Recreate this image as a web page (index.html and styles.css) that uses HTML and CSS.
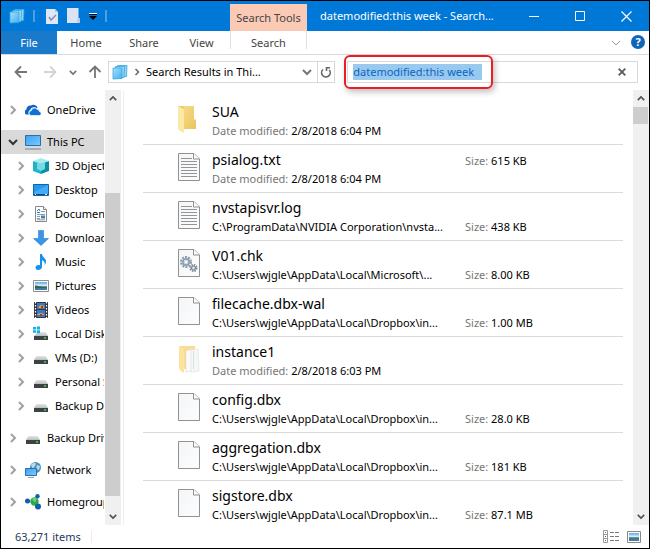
FILE: index.html
```html
<!DOCTYPE html>
<html lang="en">
<head>
    <meta charset="UTF-8">
    <meta name="viewport" content="width=device-width, initial-scale=1.0">
    <title>datemodified:this week - Search Results</title>
    <link rel="stylesheet" href="styles.css">
</head>
<body>
    <!-- Shared icons -->
    <svg class="sprite" aria-hidden="true">
        <defs>
            <linearGradient id="gSky" x1="0" y1="0" x2="1" y2="1">
                <stop offset="0" stop-color="#3aa0f4"/><stop offset="1" stop-color="#7ecbff"/>
            </linearGradient>
            <linearGradient id="gSheet" x1="0" y1="0" x2="1" y2="1">
                <stop offset="0" stop-color="#a9defa"/><stop offset="1" stop-color="#3fb0f2"/>
            </linearGradient>
            <linearGradient id="gDrive" x1="0" y1="0" x2="0" y2="1">
                <stop offset="0" stop-color="#e4e4e4"/><stop offset="1" stop-color="#b9bcbf"/>
            </linearGradient>
            <linearGradient id="gPage" x1="0" y1="0" x2="1" y2="1">
                <stop offset="0" stop-color="#f4f5f6"/><stop offset="1" stop-color="#fcfdfe"/>
            </linearGradient>
            <linearGradient id="gFolder" x1="0" y1="0" x2="1" y2="1">
                <stop offset="0" stop-color="#f6dc8c"/><stop offset="1" stop-color="#eac55c"/>
            </linearGradient>
            <linearGradient id="gPhoto" x1="0" y1="0" x2="0" y2="1">
                <stop offset="0" stop-color="#5fa4ea"/><stop offset=".45" stop-color="#d9eefa"/>
                <stop offset=".6" stop-color="#47796b"/><stop offset="1" stop-color="#3d7fb8"/>
            </linearGradient>
        </defs>
        <symbol id="chevron" viewBox="0 0 8 10"><path d="M2 1l4 4-4 4" fill="none" stroke="currentColor" stroke-width="2"/></symbol>
        <symbol id="caret" viewBox="0 0 10 8"><path d="M1 2l4 4 4-4" fill="none" stroke="currentColor" stroke-width="2"/></symbol>
        <symbol id="caret-up" viewBox="0 0 10 8"><path d="M1 6l4-4 4 4" fill="none" stroke="currentColor" stroke-width="2"/></symbol>
        <symbol id="search-folder" viewBox="0 0 16 16">
            <path d="M5.500 1.500h9.500l-.5 11-9 .5z" fill="#8fd3f7" stroke="#37a6e0" stroke-width=".8"/>
            <path d="M3.500 2.500h9l-.5 11-8.500.5z" fill="#9ad9f9" stroke="#37a6e0" stroke-width=".8"/>
            <path d="M1 4h9v10.500l-9 .5z" fill="url(#gSheet)" stroke="#37a6e0" stroke-width=".8"/>
        </symbol>
        <symbol id="onedrive" viewBox="0 0 16 16">
            <path d="M1 12.500a2.800 2.800 0 0 1 .4-5A3.800 3.800 0 0 1 6 3.600a4.400 4.400 0 0 1 6.600 2L11.500 6C9 4.500 5.800 5.500 5.200 8 3.500 8.500 3 11 4 12.500z" fill="#0a63c9"/>
            <path d="M6.500 13.500a2.400 2.400 0 0 1-.3-4.800A3.400 3.400 0 0 1 12.300 7.500a2.400 2.400 0 0 1 2.300 2.300 1.900 1.900 0 0 1 .2 3.700z" fill="#0f70d6" stroke="#fff" stroke-width=".7"/>
        </symbol>
        <symbol id="pc" viewBox="0 0 16 16">
            <path d="M.5 1.500h15v10H.5z" fill="url(#gSky)" stroke="#2d6f9f"/>
            <path d="M0 15h16" stroke="#7b95a8" stroke-width="1.200"/><path d="M3 13h10" stroke="#cfdbe4"/>
        </symbol>
        <symbol id="cube" viewBox="0 0 16 16">
            <path d="M0 3l8-3 8 3-8 3z" fill="#a6ecef"/>
            <path d="M0 3l8 3v10l-8-3z" fill="#1fb4c5"/>
            <path d="M8 6l8-3v10l-8 3z" fill="#0c8fa5"/>
            <path d="M4 4l4 1.500 4-1.500v7l-4 2-4-2z" fill="#73dbe3"/>
        </symbol>
        <symbol id="desktop" viewBox="0 0 16 16">
            <path d="M.5 2.500h15v11H.5z" fill="#229af2" stroke="#14649f"/>
            <path d="M1 10L15 3v9H1z" fill="#42acf8"/><path d="M1 12.500h14" stroke="#0d4b7e"/>
            <path d="M2 12.500h1M12 12.500h2" stroke="#fff"/>
        </symbol>
        <symbol id="documents" viewBox="0 0 16 16">
            <path d="M2.500.5h8l3 3v12h-11z" fill="#fff" stroke="#888"/><path d="M10.500.5v3h3" fill="#eee" stroke="#888"/>
            <path d="M4 5l2-2 1 2M4 6.500h3" fill="none" stroke="#2583c4"/>
            <path d="M8 5.500h4M4 8.500h8M4 12.500h3M4 10.500h3M4 13.800h8" stroke="#8a9aa6"/><path d="M8 9.500h4v3H8z" fill="#3b86b9"/>
        </symbol>
        <symbol id="downloads" viewBox="0 0 16 16"><path d="M5.500.5h5v8h5L8 15.500.5 8.500h5z" fill="#3796e8" stroke="#2a7fcb" stroke-width=".6"/></symbol>
        <symbol id="music" viewBox="0 0 16 16">
            <path d="M7 0h2c0 3 4 4 4 7.500 0 1.500-.6 2.500-1.400 3.500.6-3-.6-4-2.600-4.800V13c0 2-2 3-3.800 3S2.500 15 2.500 13.500 4 11 5.500 11c.6 0 1 .1 1.500.3z" fill="#1193ee"/>
        </symbol>
        <symbol id="pictures" viewBox="0 0 16 16">
            <path d="M.5 2.500h15v11H.5z" fill="#fff" stroke="#8e8e8e"/><path d="M2 4h12v8H2z" fill="url(#gPhoto)"/>
            <path d="M2 7.500c3 0 4 1.500 12 1.800V10H2z" fill="#2f6357"/>
        </symbol>
        <symbol id="videos" viewBox="0 0 16 16">
            <path d="M1 0h14v16H1z" fill="#34363a"/>
            <path d="M2.500 0v16M13.500 0v16" stroke="#fff" stroke-width="1.200" stroke-dasharray="1.500 1.500"/>
            <path d="M4 1h8v6H4zM4 8h8v7H4z" fill="#3b76cc"/>
            <path d="M5 5l3-2 3 1v2H6zM4 12l4-1 3 1v1H5z" fill="#e5a92c"/><path d="M8 4h2v2H8zM7 12h2v2H7z" fill="#9a3c28"/>
        </symbol>
        <symbol id="drive" viewBox="0 0 16 16">
            <path d="M3.500 6h9l2.500 4H1z" fill="url(#gDrive)"/>
            <path d="M1 10h14v4H1z" fill="#3f4245"/><path d="M11 12h2" stroke="#35e04d" stroke-width="1.500"/>
        </symbol>
        <symbol id="drive-win" viewBox="0 0 16 16">
            <path d="M4.500 6h8l2.500 4H1z" fill="url(#gDrive)"/>
            <path d="M1 10h14v4H1z" fill="#3f4245"/><path d="M11 12h2" stroke="#35e04d" stroke-width="1.500"/>
            <path d="M0 1h3v2.500H0zM3.800.5h3.200v3H3.800zM0 4.300h3v2.500H0zM3.800 4.300h3.200v3H3.800z" fill="#12b1ec"/>
        </symbol>
        <symbol id="network" viewBox="0 0 16 16">
            <circle cx="10.500" cy="5.500" r="5.500" fill="#4b90b8"/>
            <path d="M6 3c2-3 5-2 5-1s-2 2-2 4-2 0-3-3zM12 3l3 1-1 4-3-1z" fill="#b5dceb"/>
            <path d="M.5 6.500h11v7H.5z" fill="url(#gSky)" stroke="#2d6f9f"/><path d="M3 15.500h6" stroke="#8ba5b6"/>
        </symbol>
        <symbol id="homegroup" viewBox="0 0 16 16">
            <path d="M3 7l7 1 2-5M10 8l4 5" fill="none" stroke="#a7bccb"/>
            <circle cx="9.500" cy="7.500" r="4.200" fill="#2fa84a"/><path d="M7 5a4 4 0 0 1 5-.5l-2 4z" fill="#6bd077"/>
            <circle cx="2.500" cy="7" r="2.500" fill="#125fa9"/><circle cx="12.500" cy="2.200" r="2.200" fill="#125fa9"/>
            <circle cx="13" cy="12.500" r="3" fill="#125fa9"/>
        </symbol>
        <symbol id="page" viewBox="0 0 22 28">
            <path d="M.5.500h15.500l5.500 5.500v21.500H.5z" fill="url(#gPage)" stroke="#8f9193"/>
            <path d="M15.500.500v5.500h6" fill="#fff" stroke="#8f9193"/>
        </symbol>
        <symbol id="page-text" viewBox="0 0 22 28">
            <use href="#page"/>
            <path d="M3 5.500h11M3 8.500h16M3 11.500h16M3 14.500h16M3 17.500h16M3 20.500h16M3 23.500h16" stroke="#929496"/>
        </symbol>
        <symbol id="page-gears" viewBox="0 0 22 28">
            <use href="#page"/>
            <circle cx="8" cy="13" r="5" fill="none" stroke="#8a9aa8" stroke-width="2" stroke-dasharray="2 1.140"/>
            <circle cx="8" cy="13" r="3.200" fill="#cdd6dd" stroke="#8a9aa8" stroke-width="1.500"/><circle cx="8" cy="13" r="1.200" fill="#fff"/>
            <circle cx="15.500" cy="19" r="3.300" fill="none" stroke="#748492" stroke-width="1.500" stroke-dasharray="1.500 1.090"/>
            <circle cx="15.500" cy="19" r="2.200" fill="#b4c0c9" stroke="#748492"/><circle cx="15.500" cy="19" r=".8" fill="#fff"/>
        </symbol>
        <symbol id="folder" viewBox="0 0 22 28">
            <path d="M3 1h13v13.500h2V24H6z" fill="url(#gFolder)"/>
            <path d="M0 1l6 3v24l-5-2.500-1-2z" fill="#fde9a5"/><path d="M0 1h5l1 3z" fill="#e9c768"/>
        </symbol>
        <symbol id="folder-full" viewBox="0 0 22 28">
            <path d="M2 1h15v23H4z" fill="#f9dc92"/>
            <path d="M8 6l6-2v22l-6 1z" fill="#fafafa" stroke="#dedede" stroke-width=".6"/>
            <path d="M13 5l7-1 1 22-8 1z" fill="#f6f7f7" stroke="#dedede" stroke-width=".6"/><path d="M15.500 6v18" stroke="#dde0e2"/>
            <path d="M1 1l5 3v24l-4-2.500-1-2z" fill="#fde39a"/>
        </symbol>
    </svg>

    <div class="window">
        <header class="titlebar">
            <div class="quick-access">
                <svg class="icon16"><use href="#search-folder"/></svg>
                <span class="divider"></span>
                <button class="qa-button" aria-label="Properties">
                    <svg width="12" height="15" viewBox="0 0 12 15"><path d="M0 0h9l3 3v12H0z" fill="#dfe6f5"/><path d="M9 0v3h3z" fill="#a9bfe6"/><path d="M3 8l2 3 5-5" fill="none" stroke="#8191b0" stroke-width="1.500"/></svg>
                </button>
                <button class="qa-button" aria-label="New folder">
                    <svg width="14" height="16" viewBox="0 0 14 16"><path d="M0 0h11.500v10H13v5H0z" fill="#dbe3f5"/><path d="M11 10h2v5h-2l-1-2z" fill="#b8c8ea"/></svg>
                </button>
                <button class="qa-button qa-more" aria-label="Customize Quick Access Toolbar">
                    <svg width="8" height="7" viewBox="0 0 8 7"><path d="M0 .5h8" stroke="#fff"/><path d="M0 1.500h8" stroke="#000"/><path d="M0 3h8L4 7z" fill="#000"/></svg>
                </button>
                <span class="divider"></span>
            </div>
            <div class="tools-label">Search Tools</div>
            <h1 class="title">datemodified:this week - Search...</h1>
            <div class="window-controls">
                <button aria-label="Minimize"><svg width="11" height="11"><path d="M0 5.500h10" stroke="#fff"/></svg></button>
                <button aria-label="Maximize"><svg width="11" height="11"><path d="M.5.500h9v9h-9z" fill="none" stroke="#fff"/></svg></button>
                <button aria-label="Close"><svg width="11" height="11"><path d="M.5.500l10 10M10.500.500l-10 10" stroke="#fff" stroke-width="1.200"/></svg></button>
            </div>
        </header>

        <nav class="ribbon" aria-label="Ribbon">
            <button class="tab tab-file">File</button>
            <button class="tab">Home</button>
            <button class="tab">Share</button>
            <button class="tab tab-view">View</button>
            <button class="tab tab-search">Search</button>
            <button class="expand" aria-label="Expand the Ribbon"><svg width="10" height="8" viewBox="0 0 10 8"><path d="M1 2l4 4 4-4" fill="none" stroke="#999"/></svg></button>
            <button class="help" aria-label="Help">?</button>
        </nav>

        <div class="address-row">
            <div class="nav-buttons">
                <button aria-label="Back"><svg width="14" height="14" viewBox="0 0 14 14"><path d="M13 7H2M7 1.500L1.500 7 7 12.500" fill="none" stroke="#757575" stroke-width="1.800"/></svg></button>
                <button aria-label="Forward"><svg width="14" height="14" viewBox="0 0 14 14"><path d="M1 7h11M7 1.500L12.500 7 7 12.500" fill="none" stroke="#d4d4d4" stroke-width="1.800"/></svg></button>
                <button class="recent" aria-label="Recent locations"><svg width="8" height="7"><use href="#caret"/></svg></button>
                <button aria-label="Up"><svg width="14" height="14" viewBox="0 0 14 14"><path d="M7 13V2M1.500 7L7 1.500 12.500 7" fill="none" stroke="#757575" stroke-width="1.800"/></svg></button>
            </div>
            <div class="address">
                <svg class="icon16"><use href="#search-folder"/></svg>
                <svg class="crumb" width="6" height="8"><use href="#chevron"/></svg>
                <span class="path">Search Results in Thi...</span>
                <button class="drop" aria-label="Previous locations"><svg width="10" height="8"><use href="#caret"/></svg></button>
                <button class="refresh" aria-label="Refresh"><svg width="12" height="13" viewBox="0 0 12 13"><path d="M3 3.500A4.300 4.300 0 1 0 9.300 4M6.500 1v4M6 1.700h4" fill="none" stroke="#666" stroke-width="1.600"/></svg></button>
            </div>
            <div class="search">
                <input class="search-input" type="text" aria-label="Search" value="datemodified:this week">
                <button class="clear" aria-label="Clear search"><svg width="8" height="8" viewBox="0 0 8 8"><path d="M.7.700l6.600 6.600M7.300.700L.7 7.300" stroke="#5c5c5c" stroke-width="1.900"/></svg></button>
                <span class="callout"></span>
            </div>
        </div>

        <div class="body">
            <nav class="sidebar" aria-label="Navigation pane">
                <ul class="tree">
                    <li class="node group"><button class="toggle" aria-label="Expand"><svg width="8" height="10"><use href="#chevron"/></svg></button><svg class="icon16"><use href="#onedrive"/></svg><span>OneDrive</span></li>
                    <li class="node group selected"><button class="toggle" aria-label="Collapse"><svg width="10" height="8"><use href="#caret"/></svg></button><svg class="icon16"><use href="#pc"/></svg><span>This PC</span></li>
                    <li class="node child"><button class="toggle" aria-label="Expand"><svg width="8" height="10"><use href="#chevron"/></svg></button><svg class="icon16"><use href="#cube"/></svg><span>3D Objects</span></li>
                    <li class="node child"><button class="toggle" aria-label="Expand"><svg width="8" height="10"><use href="#chevron"/></svg></button><svg class="icon16"><use href="#desktop"/></svg><span>Desktop</span></li>
                    <li class="node child"><button class="toggle" aria-label="Expand"><svg width="8" height="10"><use href="#chevron"/></svg></button><svg class="icon16"><use href="#documents"/></svg><span>Documents</span></li>
                    <li class="node child"><button class="toggle" aria-label="Expand"><svg width="8" height="10"><use href="#chevron"/></svg></button><svg class="icon16"><use href="#downloads"/></svg><span>Downloads</span></li>
                    <li class="node child"><button class="toggle" aria-label="Expand"><svg width="8" height="10"><use href="#chevron"/></svg></button><svg class="icon16"><use href="#music"/></svg><span>Music</span></li>
                    <li class="node child"><button class="toggle" aria-label="Expand"><svg width="8" height="10"><use href="#chevron"/></svg></button><svg class="icon16"><use href="#pictures"/></svg><span>Pictures</span></li>
                    <li class="node child"><button class="toggle" aria-label="Expand"><svg width="8" height="10"><use href="#chevron"/></svg></button><svg class="icon16"><use href="#videos"/></svg><span>Videos</span></li>
                    <li class="node child"><button class="toggle" aria-label="Expand"><svg width="8" height="10"><use href="#chevron"/></svg></button><svg class="icon16"><use href="#drive-win"/></svg><span>Local Disk</span></li>
                    <li class="node child"><button class="toggle" aria-label="Expand"><svg width="8" height="10"><use href="#chevron"/></svg></button><svg class="icon16"><use href="#drive"/></svg><span>VMs (D:)</span></li>
                    <li class="node child"><button class="toggle" aria-label="Expand"><svg width="8" height="10"><use href="#chevron"/></svg></button><svg class="icon16"><use href="#drive"/></svg><span>Personal S</span></li>
                    <li class="node child"><button class="toggle" aria-label="Expand"><svg width="8" height="10"><use href="#chevron"/></svg></button><svg class="icon16"><use href="#drive"/></svg><span>Backup D</span></li>
                    <li class="node group"><button class="toggle" aria-label="Expand"><svg width="8" height="10"><use href="#chevron"/></svg></button><svg class="icon16"><use href="#drive"/></svg><span>Backup Driv</span></li>
                    <li class="node group"><button class="toggle" aria-label="Expand"><svg width="8" height="10"><use href="#chevron"/></svg></button><svg class="icon16"><use href="#network"/></svg><span>Network</span></li>
                    <li class="node group"><button class="toggle" aria-label="Expand"><svg width="8" height="10"><use href="#chevron"/></svg></button><svg class="icon16"><use href="#homegroup"/></svg><span>Homegroup</span></li>
                </ul>
            </nav>
            <div class="scrollbar">
                <button aria-label="Scroll up"><svg width="8" height="7"><use href="#caret-up"/></svg></button>
                <div class="track track-tree"><div class="thumb"></div></div>
                <button aria-label="Scroll down"><svg width="8" height="7"><use href="#caret"/></svg></button>
            </div>

            <main class="results">
                <ul class="files">
                    <li class="file"><svg class="file-icon"><use href="#folder"/></svg><div class="info"><div class="name">SUA</div><div class="detail"><span class="label">Date modified:</span> 2/8/2018 6:04 PM</div></div></li>
                    <li class="file"><svg class="file-icon"><use href="#page-text"/></svg><div class="info"><div class="name">psialog.txt</div><div class="detail"><span class="label">Date modified:</span> 2/8/2018 6:04 PM</div></div><div class="size size-top"><span class="label">Size:</span> 615 KB</div></li>
                    <li class="file"><svg class="file-icon"><use href="#page-text"/></svg><div class="info"><div class="name">nvstapisvr.log</div><div class="detail">C:\ProgramData\NVIDIA Corporation\nvsta...</div></div><div class="size"><span class="label">Size:</span> 438 KB</div></li>
                    <li class="file"><svg class="file-icon"><use href="#page-gears"/></svg><div class="info"><div class="name">V01.chk</div><div class="detail">C:\Users\wjgle\AppData\Local\Microsoft\...</div></div><div class="size"><span class="label">Size:</span> 8.00 KB</div></li>
                    <li class="file"><svg class="file-icon"><use href="#page"/></svg><div class="info"><div class="name">filecache.dbx-wal</div><div class="detail">C:\Users\wjgle\AppData\Local\Dropbox\in...</div></div><div class="size"><span class="label">Size:</span> 1.00 MB</div></li>
                    <li class="file"><svg class="file-icon"><use href="#folder-full"/></svg><div class="info"><div class="name">instance1</div><div class="detail"><span class="label">Date modified:</span> 2/8/2018 6:03 PM</div></div></li>
                    <li class="file"><svg class="file-icon"><use href="#page"/></svg><div class="info"><div class="name">config.dbx</div><div class="detail">C:\Users\wjgle\AppData\Local\Dropbox\in...</div></div><div class="size"><span class="label">Size:</span> 28.0 KB</div></li>
                    <li class="file"><svg class="file-icon"><use href="#page"/></svg><div class="info"><div class="name">aggregation.dbx</div><div class="detail">C:\Users\wjgle\AppData\Local\Dropbox\in...</div></div><div class="size"><span class="label">Size:</span> 181 KB</div></li>
                    <li class="file"><svg class="file-icon"><use href="#page"/></svg><div class="info"><div class="name">sigstore.dbx</div><div class="detail">C:\Users\wjgle\AppData\Local\Dropbox\in...</div></div><div class="size"><span class="label">Size:</span> 87.1 MB</div></li>
                </ul>
            </main>
            <div class="scrollbar">
                <button aria-label="Scroll up"><svg width="8" height="7"><use href="#caret-up"/></svg></button>
                <div class="track track-files"><div class="thumb"></div></div>
                <button aria-label="Scroll down"><svg width="8" height="7"><use href="#caret"/></svg></button>
            </div>
        </div>

        <footer class="statusbar">
            <span class="count">63,271 items</span>
            <button aria-label="Details view"><svg width="16" height="13" viewBox="0 0 16 13"><path d="M.5.500h4v12h-4zM.5 4.500h4M.5 8.500h4" fill="#fff" stroke="#999"/><path d="M7 2.500h4M12 2.500h4M7 6.500h4M12 6.500h4M7 10.500h4M12 10.500h4" stroke="#777"/><path d="M2 2.500h1" stroke="#3a9"/><path d="M2 6.500h1" stroke="#36c"/><path d="M2 10.500h1" stroke="#c33"/></svg></button>
            <button aria-label="Large icons view"><svg width="14" height="12" viewBox="0 0 14 12"><path d="M.5.500h13v11H.5z" fill="#fff" stroke="#888"/><path d="M2 2h10v8H2z" fill="url(#gPhoto)"/></svg></button>
        </footer>
    </div>
</body>
</html>
```
FILE: styles.css
```css
* {
    box-sizing: border-box;
}

body {
    margin: 0;
    font-family: 'Noto Sans', 'Open Sans', sans-serif;
    font-size: 11px;
    line-height: 16px;
    color: #000;
    background: #fff;
}

button {
    display: flex;
    align-items: center;
    justify-content: center;
    padding: 0;
    border: none;
    background: none;
    font: inherit;
    color: inherit;
}

ul {
    list-style: none;
    margin: 0;
    padding: 0;
}

svg {
    display: block;
    flex: none;
}

.sprite {
    position: absolute;
    width: 0;
    height: 0;
}

.icon16 {
    width: 16px;
    height: 16px;
}

.window {
    display: flex;
    flex-direction: column;
    height: 100vh;
    border: 1px solid #000;
    overflow: hidden;
}

/* Title bar */
.titlebar {
    display: flex;
    flex: none;
    height: 30px;
    background: #0078d7;
    color: #fff;
}

.quick-access {
    display: flex;
    align-items: center;
    gap: 8px;
    width: 229px;
    padding-left: 8px;
}

.divider {
    width: 2px;
    height: 12px;
    border: 1px solid #4d9fdf;
}

.qa-button {
    width: 14px;
}

.qa-button:first-of-type {
    margin-left: 2px;
}

.qa-more {
    width: 8px;
}

.tools-label {
    width: 77px;
    margin-top: 3px;
    background: #fbcab5;
    color: #444;
    line-height: 27px;
    text-align: center;
}

.title {
    flex: 1;
    margin: 0;
    padding-left: 13px;
    font-size: 11px;
    font-weight: normal;
    line-height: 30px;
    white-space: nowrap;
    overflow: hidden;
}

.window-controls {
    display: flex;
}

.window-controls button {
    width: 46px;
}

/* Ribbon tabs */
.ribbon {
    display: flex;
    flex: none;
    height: 24px;
    border-bottom: 1px solid #dadada;
    color: #444;
}

.tab {
    width: 58px;
}

.tab-file {
    width: 56px;
    background: #1979ca;
    color: #fff;
}

.tab-view {
    width: 57px;
}

.tab-search {
    width: 77px;
    height: 18px;
    padding-top: 5px;
    border-left: 1px solid #e0e0e0;
    border-right: 1px solid #e0e0e0;
}

.expand {
    margin-left: auto;
}

.help {
    width: 14px;
    height: 14px;
    margin: 4px 4px 0 10px;
    border-radius: 50%;
    background: #0f66b8;
    color: #fff;
    font-weight: bold;
}

/* Address and search */
.address-row {
    display: flex;
    flex: none;
    gap: 12px;
    padding: 6px 11px 7px 13px;
}

.nav-buttons {
    display: flex;
    align-items: center;
    gap: 15px;
    margin-right: -6px;
}

.nav-buttons .recent {
    margin: 0 -4px 0 -3px;
    color: #757575;
}

.address,
.search {
    display: flex;
    align-items: center;
    height: 22px;
    border: 1px solid #d9d9d9;
}

.address {
    flex: 228;
    padding-left: 3px;
}

.crumb {
    margin: 0 6px;
    color: #666;
}

.path {
    flex: 1;
    white-space: nowrap;
    overflow: hidden;
}

.drop {
    width: 20px;
    color: #777;
}

.refresh {
    width: 17px;
    height: 20px;
    border-left: 1px solid #d9d9d9;
}

.search {
    position: relative;
    flex: 291;
    padding-left: 5px;
}

.search-input {
    width: 129px;
    height: 16px;
    padding: 0;
    border: none;
    outline: none;
    background: #99c9ef;
    color: #0a64c2;
    font: inherit;
}

.clear {
    margin: 0 11px 0 auto;
}

.callout {
    position: absolute;
    top: -7px;
    left: -4px;
    width: 149px;
    height: 34px;
    border: 2px solid #ed1c24;
    border-radius: 6px;
    box-shadow: 2px 3px 6px rgba(0, 0, 0, 0.25);
    pointer-events: none;
}

/* Navigation pane */
.body {
    display: flex;
    flex: 1;
    min-height: 0;
}

.sidebar {
    flex: none;
    width: 104px;
    padding-top: 8px;
    padding-right: 1px;
}

.node {
    display: flex;
    align-items: center;
    gap: 6px;
    height: 24px;
    padding-left: 6px;
    white-space: nowrap;
    overflow: hidden;
}

.node.child {
    padding-left: 14px;
}

.node.group + .group,
.node.child + .group {
    margin-top: 8px;
}

.node.selected {
    background: #d9d9d9;
}

.toggle {
    flex: none;
    width: 12px;
    color: #a0a0a0;
}

.selected .toggle {
    color: #333;
}

/* Scrollbars */
.scrollbar {
    display: flex;
    flex-direction: column;
    flex: none;
    width: 16px;
    background: #f0f0f0;
    color: #505050;
}

.scrollbar button {
    height: 17px;
}

.track {
    display: flex;
    flex: 1;
    flex-direction: column;
    padding-right: 1px;
}

.track-tree {
    padding-top: 86px;
    padding-bottom: 12px;
}

.track-tree .thumb {
    flex: 1;
}

.track-files .thumb {
    height: 17px;
}

.thumb {
    background: #cdcdcd;
}

/* Results */
.results {
    flex: 1;
    min-width: 0;
    margin-left: 2px;
    padding: 7px 10px 0 19px;
    border-left: 1px solid #f0f0f0;
    overflow: hidden;
}

.file {
    display: grid;
    grid-template-columns: 22px minmax(0, 1fr) 158px;
    column-gap: 12px;
    height: 48px;
    padding: 4px 0 0 35px;
    border-bottom: 1px solid #dadada;
}

.file-icon {
    width: 22px;
    height: 28px;
    margin-top: 4px;
}

.name {
    font-size: 14px;
    line-height: 22px;
}

.detail,
.size {
    white-space: nowrap;
    overflow: hidden;
}

.size {
    margin-top: 22px;
}

.size-top {
    margin-top: 4px;
}

.label {
    color: #767676;
}

/* Status bar */
.statusbar {
    display: flex;
    align-items: center;
    flex: none;
    gap: 8px;
    height: 23px;
    padding: 0 8px 0 14px;
    color: #1e395b;
}

.count {
    margin-right: auto;
    padding-right: 10px;
    border-right: 1px solid #ececec;
    line-height: 12px;
}
```
